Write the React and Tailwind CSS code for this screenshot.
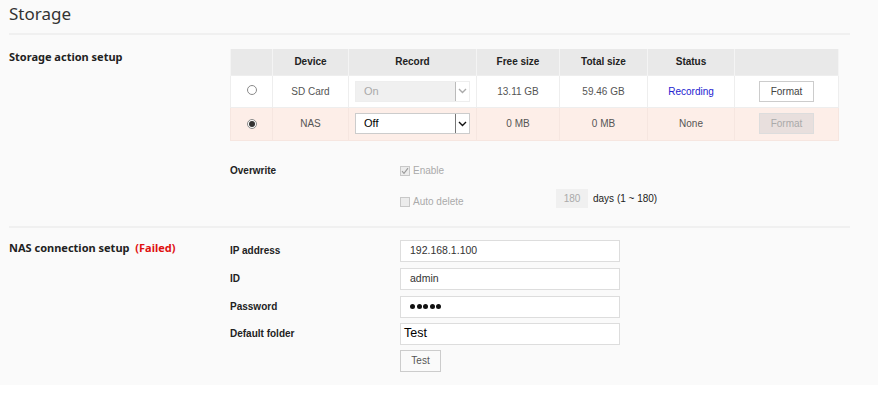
const columns = [
  { label: "", w: "w-[42px]" },
  { label: "Device", w: "w-[76px]" },
  { label: "Record", w: "w-[128px]" },
  { label: "Free size", w: "w-[83px]" },
  { label: "Total size", w: "w-[88px]" },
  { label: "Status", w: "w-[87px]" },
  { label: "", w: "w-[104px]" },
];

function Radio({ checked }) {
  return (
    <span className="inline-flex h-[10px] w-[10px] items-center justify-center rounded-full border border-[#8a8a8a] bg-white">
      {checked ? <span className="h-[6px] w-[6px] rounded-full bg-[#333]" /> : null}
    </span>
  );
}

function Chevron({ color }) {
  return (
    <svg width="9" height="6" viewBox="0 0 9 6">
      <path d="M1 1 L4.5 4.5 L8 1" fill="none" stroke={color} strokeWidth="1.4" />
    </svg>
  );
}

function FakeSelect({ value, disabled }) {
  return (
    <div
      className={
        "flex h-[21px] w-[115px] items-center justify-between border " +
        (disabled ? "border-[#eee] bg-[#f0f0f0] text-[#aaa]" : "border-[#ccc] bg-white text-black")
      }
    >
      <span className="pl-[8px] text-[11px]">{value}</span>
      <span
        className={
          "flex h-[19px] w-[14px] items-center justify-center border-l " +
          (disabled ? "border-[#bbb] bg-white" : "border-[#777] bg-white")
        }
      >
        <Chevron color={disabled ? "#aaa" : "#111"} />
      </span>
    </div>
  );
}

function Checkbox({ checked }) {
  return (
    <span className="inline-flex h-[10px] w-[10px] items-center justify-center border border-[#c8c8c8] bg-[#ececec]">
      {checked ? (
        <svg width="8" height="8" viewBox="0 0 8 8">
          <path d="M1 4.2 L3 6.3 L7 1.2" fill="none" stroke="#999" strokeWidth="1.1" />
        </svg>
      ) : null}
    </span>
  );
}

function Field({ label, children, className = "" }) {
  return (
    <div className={"flex h-[22px] items-center " + className}>
      <span className="w-[170px] text-[10px] font-bold text-[#222]">{label}</span>
      {children}
    </div>
  );
}

function TextBox({ children }) {
  return (
    <div className="flex h-[22px] w-[220px] items-center border border-[#ddd] bg-white">
      {children}
    </div>
  );
}

export default function App() {
  return (
    <div className="min-h-[394px] bg-white font-['Liberation_Sans',Arial,sans-serif]">
      <div className="h-[385px] bg-[#fafafa] pl-[9px]">
        <h1 className="h-[33px] pt-[2px] font-['Noto_Sans',sans-serif] text-[17px] leading-[24px] text-[#333]">
          Storage
        </h1>
        <div className="h-[2px] w-[841px] bg-[#f0f0f0]" />

        {/* storage action */}
        <div className="flex pt-[14px]">
          <div className="w-[221px] pt-[1px] font-['Noto_Sans',sans-serif] text-[11px] font-bold leading-[14px] text-[#222]">
            Storage action setup
          </div>
          <div>
            <table className="border-collapse text-[10px] text-[#555]">
              <thead>
                <tr className="h-[26px] bg-[#e9e9e9]">
                  {columns.map((c, i) => (
                    <th key={i} className={c.w + " border-x border-[#f4f4f4] p-0 text-center font-bold text-[#222]"}>
                      {c.label}
                    </th>
                  ))}
                </tr>
              </thead>
              <tbody>
                <tr className="h-[32px] bg-white">
                  <td className="border border-[#eee] text-center"><Radio /></td>
                  <td className="border border-[#eee] text-center">SD Card</td>
                  <td className="border border-[#eee] pl-[6px]"><FakeSelect value="On" disabled /></td>
                  <td className="border border-[#eee] text-center">13.11 GB</td>
                  <td className="border border-[#eee] text-center">59.46 GB</td>
                  <td className="border border-[#eee] text-center text-[#2323d0]">Recording</td>
                  <td className="border border-[#eee] text-center">
                    <button className="h-[21px] w-[55px] border border-[#ccc] bg-white text-[10px] text-[#444]">Format</button>
                  </td>
                </tr>
                <tr className="h-[33px] bg-[#fdeee8]">
                  <td className="border border-[#f6e6e0] text-center"><Radio checked /></td>
                  <td className="border border-[#f6e6e0] text-center">NAS</td>
                  <td className="border border-[#f6e6e0] pl-[6px]"><FakeSelect value="Off" /></td>
                  <td className="border border-[#f6e6e0] text-center">0 MB</td>
                  <td className="border border-[#f6e6e0] text-center">0 MB</td>
                  <td className="border border-[#f6e6e0] text-center">None</td>
                  <td className="border border-[#f6e6e0] text-center">
                    <button className="h-[21px] w-[55px] border border-[#ddd] bg-[#e8dfdd] text-[10px] text-[#aaa]">Format</button>
                  </td>
                </tr>
              </tbody>
            </table>

            <div className="mt-[20px] flex flex-col gap-[11px] text-[10px]">
              <div className="flex h-[20px] items-center">
                <span className="w-[170px] font-bold text-[#222]">Overwrite</span>
                <Checkbox checked />
                <span className="ml-[3px] text-[#aaa]">Enable</span>
              </div>
              <div className="flex h-[20px] items-center">
                <span className="w-[170px]" />
                <Checkbox />
                <span className="ml-[3px] w-[143px] text-[#aaa]">Auto delete</span>
                <span className="-mt-[6px] flex h-[19px] w-[32px] items-center justify-center bg-[#f0f0f0] text-[#aaa]">180</span>
                <span className="-mt-[6px] ml-[5px] text-[#222]">days (1 ~ 180)</span>
              </div>
            </div>
          </div>
        </div>

        <div className="mt-[14px] h-[2px] w-[841px] bg-[#f0f0f0]" />

        {/* nas connection */}
        <div className="flex pt-[12px]">
          <div className="w-[221px] font-['Noto_Sans',sans-serif] text-[11px] font-bold leading-[16px] text-[#222]">
            NAS connection setup <span className="ml-[3px] text-[#e01010]">(Failed)</span>
          </div>
          <div className="flex flex-col gap-[5px]">
            <Field label="IP address">
              <TextBox><span className="pl-[9px] text-[10.5px] text-[#333]">192.168.1.100</span></TextBox>
            </Field>
            <Field label="ID" className="mt-[1px]">
              <TextBox><span className="pl-[9px] text-[10.5px] text-[#333]">admin</span></TextBox>
            </Field>
            <Field label="Password" className="mt-[1px]">
              <TextBox>
                <span className="flex gap-[1.5px] pl-[9px]">
                  {[0, 1, 2, 3, 4].map((i) => (
                    <span key={i} className="h-[5px] w-[5px] rounded-full bg-[#111]" />
                  ))}
                </span>
              </TextBox>
            </Field>
            <Field label="Default folder">
              <TextBox><span className="pl-[3px] text-[12.5px] text-black">Test</span></TextBox>
            </Field>
            <div className="flex h-[22px]">
              <span className="w-[170px]" />
              <button className="h-[22px] w-[41px] border border-[#ccc] bg-[#fafafa] text-[10px] text-[#555]">Test</button>
            </div>
          </div>
        </div>
      </div>
    </div>
  );
}
